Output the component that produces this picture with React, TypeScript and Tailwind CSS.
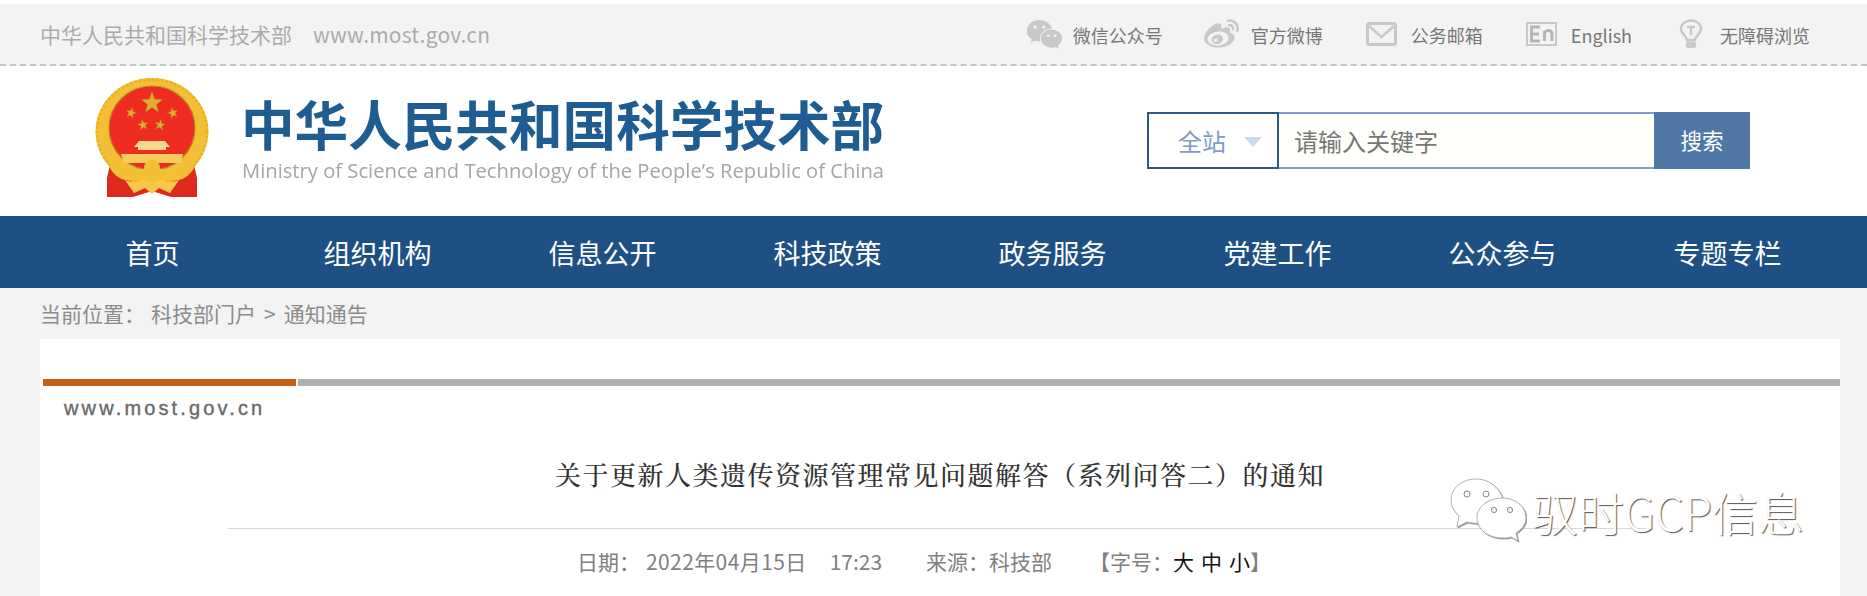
import React from "react";
import { FaWeixin, FaWeibo } from "react-icons/fa";

const cjk = '"Noto Sans CJK SC", "Noto Sans", sans-serif';

function Star({ x, y, r, rot = 0 }: { x: number; y: number; r: number; rot?: number }) {
  const pts: string[] = [];
  for (let i = 0; i < 10; i++) {
    const rad = i % 2 === 0 ? r : r * 0.4;
    const a = (Math.PI / 5) * i - Math.PI / 2 + (rot * Math.PI) / 180;
    pts.push(`${(x + rad * Math.cos(a)).toFixed(2)},${(y + rad * Math.sin(a)).toFixed(2)}`);
  }
  return <polygon points={pts.join(" ")} fill="#e4ae2c" stroke="#a8832a" strokeWidth="0.5" />;
}

function Emblem() {
  return (
    <svg width="114" height="120" viewBox="0 0 114 120" className="shrink-0">
      {/* curtains */}
      <path d="M17 78 L12 100 L12 119 L38 119 L57 113 L76 119 L102 119 L102 100 L97 78 Z" fill="#dc2a1e" />
      {/* gold ring */}
      <ellipse cx="57" cy="53.5" rx="56.5" ry="53.5" fill="#f3bf35" />
      <ellipse cx="57" cy="53.5" rx="55" ry="52" fill="none" stroke="#e9ad25" strokeWidth="2.5" strokeDasharray="2 2.5" />
      {/* red field */}
      <ellipse cx="57" cy="50" rx="43" ry="42" fill="#ee2c20" stroke="#b78a28" strokeWidth="1.2" />
      <Star x={57} y={25} r={11.5} />
      <Star x={36} y={35} r={5.5} rot={15} />
      <Star x={78} y={35} r={5.5} rot={-15} />
      <Star x={48} y={47} r={5.5} rot={-10} />
      <Star x={65} y={47} r={5.5} rot={10} />
      {/* gate */}
      <path d="M44 63 H70 L75 69 H71 V72 H43 V69 H39 Z" fill="#f6d98c" />
      <path d="M26 76 H88 L86 85 H29 Z" fill="#f6cd5c" />
      {/* gear and sash */}
      <circle cx="57" cy="90" r="8" fill="#f3bf35" />
      <path d="M18 82 C26 96 40 96 47 91 H67 C74 96 88 96 96 82 L99 90 C90 106 74 104 66 98 H48 C40 104 24 106 15 90 Z" fill="#f3bf35" />
      <path d="M30 102 C38 105 44 104 49 102 L57 105 L65 102 C70 104 76 105 84 102 L75 115 L64 110 L57 116 L50 110 L39 115 Z" fill="#f5c84a" />
    </svg>
  );
}

function MailIcon() {
  return (
    <svg width="31" height="24" viewBox="0 0 31 24" fill="none" stroke="#c8c8c8">
      <rect x="1.5" y="1.5" width="28" height="21" rx="2" strokeWidth="3" />
      <path d="M3 4 L15.5 15 L28 4" strokeWidth="2.5" />
    </svg>
  );
}

function EnIcon() {
  return (
    <span className="flex h-[24px] w-[31px] items-center justify-center border-2 border-[#c8c8c8]">
      <svg width="25" height="18" viewBox="0 0 25 18" fill="none" stroke="#b4b4b4" strokeWidth="2.8">
        <path d="M11 2 H2.5 V16 H11 M2.5 9 H10" />
        <path d="M15.5 16 V6 M15.5 8 C18 4 23 5 23 9 V16" />
      </svg>
    </span>
  );
}

function BulbIcon() {
  return (
    <svg width="24" height="30" viewBox="0 0 24 30" fill="none">
      <path d="M8 21 C8 17 2 15 2 10 C2 5 6.5 1.5 12 1.5 C17.5 1.5 22 5 22 10 C22 15 16 17 16 21 Z" stroke="#c8c8c8" strokeWidth="2.4" />
      <path d="M8 8 H16 M12 8 V16" stroke="#c8c8c8" strokeWidth="2.4" />
      <rect x="7" y="22.5" width="10" height="6.5" rx="2" fill="#c8c8c8" />
    </svg>
  );
}

function WatermarkWechat() {
  return (
    <svg width="76" height="66" viewBox="0 0 76 66" className="shrink-0 drop-shadow-[1px_1px_0_#999999]">
      <g fill="#fff" stroke="#a8a8a8" strokeWidth="0.9" strokeLinejoin="round">
        <path d="M26 1 C12 1 1 10 1 22 C1 29 5 34 9 38 L7 49 L17 44 C22 45 27 46 32 45 L54 26 C52 11 40 1 26 1 Z" />
        <path d="M52 20 C38 20 27 29 27 40 C27 51 38 60 52 60 C55 60 58 60 61 59 L68 63 L66 55 C72 51 76 46 76 40 C76 29 66 20 52 20 Z" />
      </g>
      <g fill="#fff" stroke="#888" strokeWidth="1">
        <circle cx="17" cy="16" r="3" />
        <circle cx="36" cy="16" r="3" />
        <circle cx="44" cy="32" r="2.6" />
        <circle cx="60" cy="32" r="2.6" />
      </g>
    </svg>
  );
}

const topItems = [
  { label: "微信公众号", icon: <FaWeixin size={37} color="#c8c8c8" />, iconW: "w-[47px]", ml: "ml-0" },
  { label: "官方微博", icon: <FaWeibo size={35} color="#c8c8c8" />, iconW: "w-[47px]", ml: "ml-[41px]" },
  { label: "公务邮箱", icon: <MailIcon />, iconW: "w-[45px]", ml: "ml-[43px]" },
  { label: "English", icon: <EnIcon />, iconW: "w-[45px]", ml: "ml-[43px]" },
  { label: "无障碍浏览", icon: <BulbIcon />, iconW: "w-[41px]", ml: "ml-[47px]" },
];

const navItems = ["首页", "组织机构", "信息公开", "科技政策", "政务服务", "党建工作", "公众参与", "专题专栏"];

export default function App() {
  return (
    <div className="h-[596px] w-[1867px] overflow-hidden bg-[#f3f3f3]" style={{ fontFamily: cjk }}>
      <div className="h-[4px] bg-white" />
      {/* top bar */}
      <div className="flex h-[62px] items-center justify-between border-b-2 border-dashed border-[#c4c4c4] pl-[40px] pr-[57px]">
        <div className="mt-[1px] flex items-center text-[21px] text-[#ababab]">
          <span>中华人民共和国科学技术部</span>
          <span className="ml-[21px] tracking-[0.2px]">www.most.gov.cn</span>
        </div>
        <div className="mt-[3px] flex items-center text-[18px] text-[#777777]">
          {topItems.map((t) => (
            <div key={t.label} className={`flex items-center ${t.ml}`}>
              <span className={`-mt-[3px] flex items-center ${t.iconW}`}>{t.icon}</span>
              <span>{t.label}</span>
            </div>
          ))}
        </div>
      </div>

      {/* header */}
      <div className="flex h-[150px] bg-white pl-[95px]">
        <div className="mt-[12px]">
          <Emblem />
        </div>
        <div className="ml-[32px] mt-[26px] w-[644px]">
          <div className="whitespace-nowrap text-[53.6px] font-bold leading-[62px] text-[#1f5c92]">中华人民共和国科学技术部</div>
          <div className="ml-[1px] mt-[3px] origin-left scale-x-[0.985] whitespace-nowrap text-[20.5px] leading-[26px] text-[#a5a5a5]" style={{ fontFamily: '"Open Sans", sans-serif' }}>
            Ministry of Science and Technology of the People’s Republic of China
          </div>
        </div>
        <div className="ml-[262px] mt-[46px] flex h-[57px] w-[603px]">
          <div className="flex w-[132px] items-center border-2 border-[#2c5787] pl-[29px] text-[24px] text-[#7f9cc4]">
            全站
            <span className="ml-[18px] mt-[2px] h-0 w-0 border-x-[9px] border-t-[10px] border-x-transparent border-t-[#c9d9ec]" />
          </div>
          <div className="flex w-[375px] items-center border-y-2 border-[#7f9fc8] bg-[#fffffb] pl-[15px] text-[24px] text-[#777777]">
            请输入关键字
          </div>
          <div className="flex w-[96px] items-center justify-center bg-[#4f78a6] text-[21.5px] text-white">搜索</div>
        </div>
      </div>

      {/* nav */}
      <div className="h-[72px] bg-[#1f5084]">
        <div className="ml-[40px] flex h-full w-[1800px] pt-[2px]">
          {navItems.map((n) => (
            <div key={n} className="flex flex-1 items-center justify-center text-[27px] text-white">
              {n}
            </div>
          ))}
        </div>
      </div>

      {/* breadcrumb */}
      <div className="flex h-[51px] items-center pl-[40px] text-[21px] text-[#8c8c8c]">
        <span>当前位置：</span>
        <span className="ml-[6px]">科技部门户</span>
        <span className="mx-[8px]">&gt;</span>
        <span>通知通告</span>
      </div>

      {/* card */}
      <div className="relative mx-[40px] h-[300px] w-[1800px] bg-white">
        <div className="flex pl-[3px] pt-[40px]">
          <div className="h-[7px] w-[253px] bg-[#c55f13]" />
          <div className="ml-[2px] h-[7px] flex-1 bg-[#b0b0b0]" />
        </div>
        <div className="ml-[24px] mt-[10px] text-[20px] leading-[24px] tracking-[3.15px] text-[#6a6a6a]" style={{ fontFamily: '"Liberation Sans", sans-serif', WebkitTextStroke: "0.4px #6a6a6a" }}>
          www.most.gov.cn
        </div>
        <div className="mt-[36px] text-center text-[26px] font-medium leading-[36px] tracking-[1.5px] text-[#333333]" style={{ fontFamily: '"Noto Serif CJK SC", "Noto Sans CJK SC", serif' }}>
          关于更新人类遗传资源管理常见问题解答（系列问答二）的通知
        </div>
        <div className="mx-[188px] mt-[36px] h-px bg-[#d9d9d9]" />
        <div className="ml-[537px] mt-[17px] flex items-center whitespace-nowrap text-[21px] leading-[30px] text-[#808080]">
          <span>日期：</span>
          <span className="ml-[6px] tracking-[0.4px]">2022年04月15日</span>
          <span className="ml-[23px]">17:23</span>
          <span className="ml-[44px]">来源：科技部</span>
          <span className="ml-[37px]">【字号：</span>
          <span className="tracking-[7px] text-[#111111]">大中小</span>
          <span className="-ml-[7px]">】</span>
        </div>
        {/* watermark */}
        <div className="absolute left-[1410px] top-[139px] flex items-start">
          <WatermarkWechat />
          <span
            className="ml-[6px] mt-[6px] whitespace-nowrap text-[46px] font-light leading-[54px] text-white"
            style={{ textShadow: "1px 1px 1px #555555" }}
          >
            驭时GCP信息
          </span>
        </div>
      </div>
    </div>
  );
}
